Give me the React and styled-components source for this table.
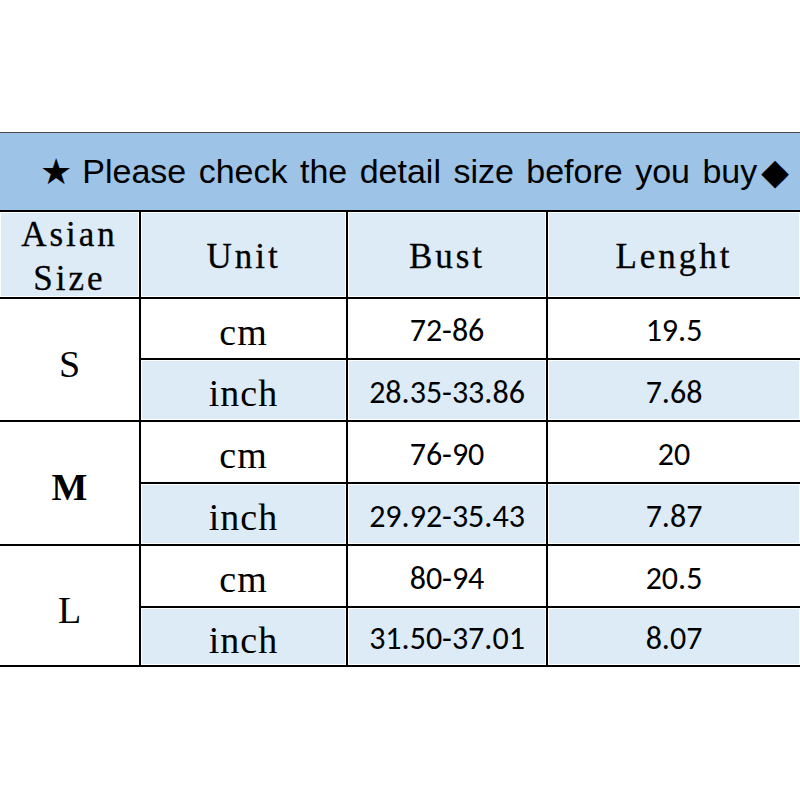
import React from "react";
import styled, { createGlobalStyle } from "styled-components";

const GlobalStyle = createGlobalStyle`
  html, body {
    margin: 0;
    padding: 0;
    background: #fff;
  }
`;

const Page = styled.div`
  padding-top: 132px;
  width: 800px;
`;

const Banner = styled.div`
  height: 77px;
  border-top: 1px solid #4a4a4a;
  background: #9dc3e6;
  display: flex;
  align-items: center;
  padding-left: 40px;
  font-family: "Liberation Sans", Arial, sans-serif;
  font-size: 34px;
  word-spacing: 3px;
  color: #000;
  white-space: nowrap;
`;

const Mark = styled.span`
  font-family: "DejaVu Sans", sans-serif;
  font-size: ${(p) => p.$size || 32}px;
  margin-right: ${(p) => p.$gap || 0}px;
  margin-left: ${(p) => p.$lead || 0}px;
`;

const Table = styled.div`
  display: grid;
  grid-template-columns: 139px 205px 198px 1fr;
  grid-template-rows: 85px 59px 60px 60px 60px 60px 57px;
  gap: 2px;
  padding: 2px 0;
  background: #000;
`;

const Cell = styled.div`
  display: flex;
  align-items: center;
  justify-content: center;
  text-align: center;
  color: #000;
  background: ${(p) => (p.$shade ? "#ddebf7" : "#fff")};
  box-shadow: ${(p) => (p.$shade ? "inset 0 0 0 1px #fff" : "none")};
  grid-row: span ${(p) => p.$span || 1};
`;

const HeadCell = styled(Cell)`
  font-family: "Liberation Serif", "Times New Roman", serif;
  font-size: 35px;
  letter-spacing: 3px;
  line-height: 44px;
  padding-top: 4px;
  -webkit-text-stroke: 0.3px #000;
`;

const SizeCell = styled(Cell)`
  font-family: "Liberation Serif", "Times New Roman", serif;
  font-size: 38px;
  font-weight: ${(p) => (p.$bold ? 700 : 400)};
  padding-top: 8px;
`;

const UnitCell = styled(Cell)`
  font-family: "Liberation Serif", "Times New Roman", serif;
  font-size: 38px;
  letter-spacing: 1px;
  padding-top: 6px;
`;

const NumCell = styled(Cell)`
  font-family: Carlito, Lato, "Open Sans", sans-serif;
  font-size: 32px;
  padding-top: 4px;
`;

const rows = [
  { size: "S", cm: ["72-86", "19.5"], inch: ["28.35-33.86", "7.68"] },
  { size: "M", cm: ["76-90", "20"], inch: ["29.92-35.43", "7.87"], bold: true },
  { size: "L", cm: ["80-94", "20.5"], inch: ["31.50-37.01", "8.07"] },
];

export default function App() {
  return (
    <>
      <GlobalStyle />
      <Page>
        <Banner>
          <Mark $size={36} $gap={10}>★</Mark>
          Please check the detail size before you buy
          <Mark $size={36} $lead={4}>◆</Mark>
        </Banner>
        <Table>
          <HeadCell $shade>
            Asian
            <br />
            Size
          </HeadCell>
          <HeadCell $shade>Unit</HeadCell>
          <HeadCell $shade>Bust</HeadCell>
          <HeadCell $shade>Lenght</HeadCell>
          {rows.map((r) => (
            <React.Fragment key={r.size}>
              <SizeCell $span={2} $bold={r.bold}>{r.size}</SizeCell>
              <UnitCell>cm</UnitCell>
              <NumCell>{r.cm[0]}</NumCell>
              <NumCell>{r.cm[1]}</NumCell>
              <UnitCell $shade>inch</UnitCell>
              <NumCell $shade>{r.inch[0]}</NumCell>
              <NumCell $shade>{r.inch[1]}</NumCell>
            </React.Fragment>
          ))}
        </Table>
      </Page>
    </>
  );
}
